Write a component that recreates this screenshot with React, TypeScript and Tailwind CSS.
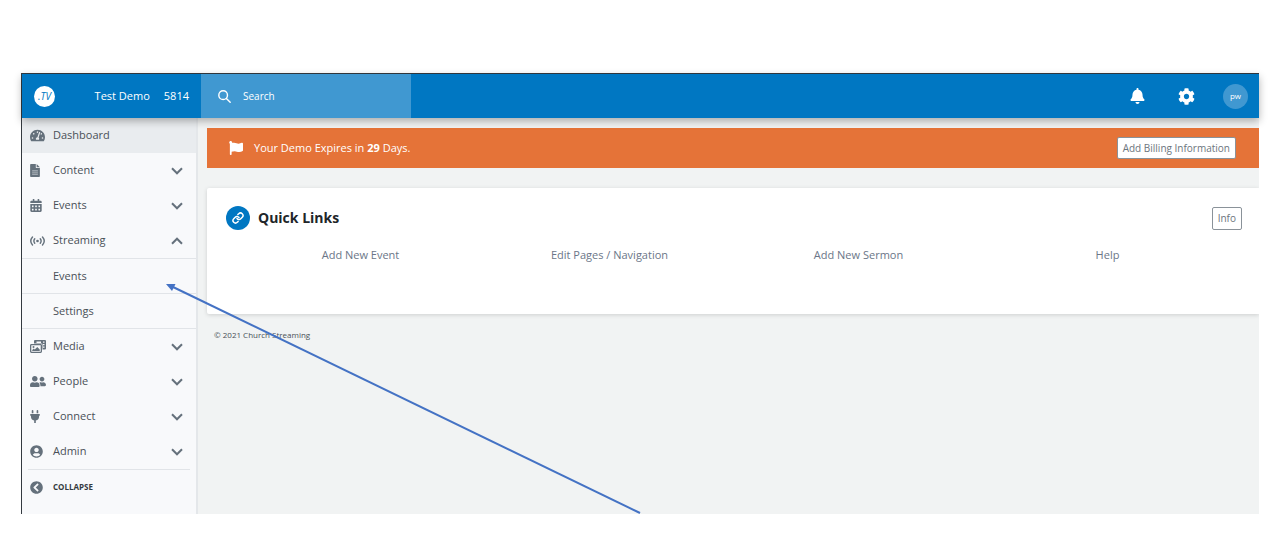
import type { ReactNode } from "react";
import { Link as LinkIcon } from "lucide-react";
import {
  FaBell,
  FaCalendarAlt,
  FaChevronCircleLeft,
  FaCog,
  FaFlag,
  FaPlug,
  FaTachometerAlt,
  FaUserCircle,
  FaUserFriends,
} from "react-icons/fa";

function FileIcon() {
  return (
    <svg viewBox="0 0 12 16" className="h-[13px] w-[10px]" aria-hidden="true">
      <path fill="currentColor" d="M1 0h6v4.2c0 .5.4.8.8.8H12v10a1 1 0 0 1-1 1H1a1 1 0 0 1-1-1V1a1 1 0 0 1 1-1Z" />
      <path fill="currentColor" d="M8 0l4 4H8Z" />
      <path fill="#a3abb2" d="M2.5 7.5h7v6h-7Z" />
      <path stroke="currentColor" strokeWidth=".8" d="M2.5 9.5h7M2.5 11.5h7" />
    </svg>
  );
}

function StreamIcon() {
  return (
    <svg viewBox="0 0 30 20" className="h-[10px] w-[15px]" fill="none" stroke="currentColor" strokeWidth="2.8" strokeLinecap="round" aria-hidden="true">
      <path d="M5 2Q-2 10 5 18M25 2Q32 10 25 18M9.5 5.500Q6 10 9.500 14.500M20.500 5.500Q24 10 20.500 14.500" />
      <circle cx="15" cy="10" r="2.600" fill="currentColor" stroke="none" />
    </svg>
  );
}

function MediaIcon() {
  return (
    <svg viewBox="0 0 32 26" className="h-[13px] w-4" fill="none" aria-hidden="true">
      <path fill="currentColor" fillRule="evenodd" d="M10 0h20a2 2 0 0 1 2 2v15a2 2 0 0 1-2 2h-5V9a2 2 0 0 0-2-2H8V2a2 2 0 0 1 2-2Zm3 3v3h9V3Zm13 0v2.500h3V3Zm0 5v2.500h3V8Zm0 5v2.500h3V13Z" />
      <rect x="1.300" y="9.300" width="21.400" height="15.400" rx="1.500" stroke="currentColor" strokeWidth="2.600" />
      <circle cx="7" cy="14" r="2" fill="currentColor" />
      <path fill="currentColor" d="M4.500 22v-2l3-3 2 2 5-5 5 5v3Z" />
    </svg>
  );
}

function Chevron({ up = false }: { up?: boolean }) {
  return (
    <svg viewBox="0 0 12 8" className="h-2 w-3 shrink-0 text-[#65717c]" fill="none" stroke="currentColor" strokeWidth="2" aria-hidden="true">
      <path d={up ? "M1 6.700 6 1.700l5 5" : "M1 1.300l5 5 5-5"} />
    </svg>
  );
}

type Item = { label: string; icon: ReactNode; open?: boolean; children?: string[] };

const items: Item[] = [
  { label: "Content", icon: <FileIcon /> },
  { label: "Events", icon: <FaCalendarAlt className="h-[13px] w-3" /> },
  { label: "Streaming", icon: <StreamIcon />, open: true, children: ["Events", "Settings"] },
  { label: "Media", icon: <MediaIcon /> },
  { label: "People", icon: <FaUserFriends className="h-[15px] w-4" /> },
  { label: "Connect", icon: <FaPlug className="h-[13px] w-[10px]" /> },
  { label: "Admin", icon: <FaUserCircle className="size-[13px]" /> },
];

const links = ["Add New Event", "Edit Pages / Navigation", "Add New Sermon", "Help"];

function Header() {
  return (
    <header className="relative z-10 flex h-11 items-stretch bg-[#0077c2] text-[11px] text-white shadow-[0_3px_8px_rgba(0,0,0,0.3)]">
      <div className="flex w-[179px] shrink-0 items-center pr-3 pl-3">
        <a href="#" aria-label="Home" className="flex size-[21px] items-center justify-center rounded-full bg-white font-['Liberation_Sans_Narrow','Open_Sans',sans-serif] text-[10px] text-[#0077c2] italic">
          .TV
        </a>
        <span className="ml-auto">Test Demo</span>
        <span className="ml-[14px]">5814</span>
      </div>
      <div className="flex w-[210px] shrink-0 items-center gap-3 bg-[#4098d1] pl-[17px]">
        <svg viewBox="0 0 24 24" className="size-[13px] shrink-0" fill="none" stroke="currentColor" strokeWidth="2.600" strokeLinecap="round" aria-hidden="true">
          <circle cx="9.500" cy="9.500" r="8" />
          <path d="m15.500 15.500 7 7" />
        </svg>
        <input type="search" aria-label="Search" placeholder="Search" className="h-5 w-full min-w-0 bg-transparent text-[10px] outline-none placeholder:text-white" />
      </div>
      <div className="ml-auto flex items-center pr-[11px]">
        <button type="button" aria-label="Notifications" className="mr-[33px]"><FaBell className="h-4 w-[15px]" /></button>
        <button type="button" aria-label="Preferences" className="mr-7"><FaCog className="size-[17px]" /></button>
        <button type="button" className="size-[25px] rounded-full bg-[#4098d1] text-[8px]">pw</button>
      </div>
    </header>
  );
}

function Sidebar() {
  return (
    <nav className="w-[176px] shrink-0 border-r-2 border-[#e4e7ea] bg-[#f8f9fb] pb-[10px] text-[11px] text-[#495057]">
      <a href="#" className="flex h-[35px] items-center bg-[#e9ecef] pl-2">
        <span className="w-[23px] text-[#65717c]"><FaTachometerAlt className="size-[15px]" /></span>
        Dashboard
      </a>
      {items.map((item) => (
        <div key={item.label}>
          <button type="button" aria-expanded={!!item.open} className="flex h-[35px] w-full items-center pr-[13px] pl-2 text-left">
            <span className="w-[23px] text-[#65717c]">{item.icon}</span>
            <span className="flex-1">{item.label}</span>
            <Chevron up={item.open} />
          </button>
          {item.children && (
            <div className="border-b border-[#e1e4e8]">
              {item.children.map((child) => (
                <a key={child} href="#" className="flex h-[35px] items-center border-t border-[#e1e4e8] pl-[31px]">{child}</a>
              ))}
            </div>
          )}
        </div>
      ))}
      <div className="mx-[6px] border-t border-[#e1e4e8]" />
      <button type="button" className="flex h-[34px] w-full items-center pl-2 text-left text-[8px] font-bold text-[#343a40]">
        <span className="w-[23px] text-[#65717c]"><FaChevronCircleLeft className="size-[13px]" /></span>
        COLLAPSE
      </button>
    </nav>
  );
}

export default function App() {
  return (
    <div className="relative min-h-screen bg-white px-[21px] pt-[73px] pb-8 font-['Open_Sans',sans-serif]">
      <div className="border-t border-l border-[#343a40]">
        <Header />
        <div className="flex overflow-hidden bg-[#f1f3f3]">
          <Sidebar />
          <main className="min-w-0 flex-1 pt-[10px] pl-[9px]">
            <section className="flex h-10 items-center bg-[#e57338] pr-[23px] pl-[22px] text-[11px] text-white">
              <FaFlag className="mr-[11px] size-[14px]" />
              <p>Your Demo Expires in <strong>29</strong> Days.</p>
              <button type="button" className="ml-auto h-[22px] rounded-xs border border-[#8a9299] bg-white px-[5px] text-[10px] text-[#6c757d]">
                Add Billing Information
              </button>
            </section>
            <section className="mt-5 rounded-l-xs bg-white pt-[18px] pb-[49px] shadow-[0_1px_4px_rgba(0,0,0,0.15)]">
              <div className="flex items-center pr-[17px] pl-[19px]">
                <span className="flex size-6 items-center justify-center rounded-full bg-[#0077c2] text-white"><LinkIcon className="size-3" strokeWidth={3} /></span>
                <h2 className="ml-2 text-sm font-bold text-[#212529]">Quick Links</h2>
                <button type="button" className="ml-auto h-[23px] rounded-xs border border-[#8a9299] px-[5px] text-[10px] text-[#6c757d]">Info</button>
              </div>
              <div className="mt-[15px] grid grid-cols-4 pr-[27px] pl-[29px] text-center text-[11px] text-[#6b7688]">
                {links.map((link) => (
                  <a key={link} href="#" className="leading-5">{link}</a>
                ))}
              </div>
            </section>
            <footer className="mt-[15px] pl-[7px] text-[8px] leading-3 text-[#495057]">© 2021 Church Streaming</footer>
          </main>
        </div>
      </div>
      <svg viewBox="0 0 475 231" className="pointer-events-none absolute top-[283px] left-[166px] z-20 h-[231px] w-[475px]" aria-hidden="true">
        <path d="M6 3.500 474 230" stroke="#4472c4" strokeWidth="2" />
        <path d="M0 1h9.500L6 8Z" fill="#4472c4" />
      </svg>
    </div>
  );
}
